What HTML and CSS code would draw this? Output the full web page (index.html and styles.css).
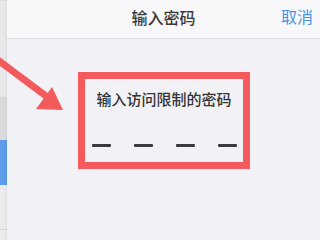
FILE: index.html
```html
<!DOCTYPE html>
<html lang="zh">
<head>
<meta charset="utf-8">
<link rel="stylesheet" href="styles.css">
</head>
<body>
<div class="screen">
  <div class="sidebar">
    <div class="seg seg-a"></div>
    <div class="seg seg-b"></div>
    <div class="seg seg-c"></div>
    <div class="seg seg-d"></div>
    <div class="seg seg-e"></div>
  </div>
  <div class="modal">
    <div class="header">
      <span class="title">输入密码</span>
      <span class="cancel">取消</span>
    </div>
    <div class="content">
      <div class="box">
        <div class="prompt">输入访问限制的密码</div>
        <div class="dashes">
          <span class="dash"></span>
          <span class="dash"></span>
          <span class="dash"></span>
          <span class="dash"></span>
        </div>
      </div>
    </div>
  </div>
  <svg class="arrow" width="80" height="120" viewBox="0 0 80 120">
    <line x1="-6" y1="57" x2="46" y2="96" stroke="#f25a5c" stroke-width="7"/>
    <polygon points="63,110 52,87 36,109" fill="#f25a5c"/>
  </svg>
</div>
</body>
</html>
```

FILE: styles.css
```css
html, body {
  margin: 0;
  padding: 0;
}
body {
  width: 320px;
  height: 240px;
  overflow: hidden;
  font-family: "Noto Sans CJK SC", "Noto Sans", sans-serif;
}
.screen {
  position: relative;
  display: flex;
  width: 320px;
  height: 240px;
  background: #f2f2f6;
}
.sidebar {
  width: 7px;
  display: flex;
  flex-direction: column;
  background: #e9e9eb;
}
.seg-a {
  height: 97px;
  background: #e8e8ea;
  box-shadow: inset 0 16px 0 -15px #dcdcde;
}
.seg-b {
  height: 43px;
  background: #dadadd;
}
.seg-c {
  height: 45px;
  background: #5c9ce8;
}
.seg-d {
  height: 44px;
  background: #ebebed;
  border-bottom: 1px solid #d6d6d8;
}
.seg-e {
  flex: 1;
  background: #ebebed;
}
.modal {
  flex: 1;
  display: flex;
  flex-direction: column;
  background: #f2f2f6;
  box-shadow: -1px 0 2px rgba(0,0,0,0.06);
}
.header {
  position: relative;
  height: 38px;
  display: flex;
  align-items: center;
  justify-content: center;
  background: #f8f8fa;
  border-bottom: 1px solid #dcdce0;
}
.title {
  font-size: 16px;
  font-weight: 500;
  color: #3a3a3c;
  line-height: 20px;
  padding-bottom: 4px;
}
.cancel {
  position: absolute;
  right: 7px;
  top: 6px;
  font-size: 16px;
  line-height: 20px;
  color: #4a92e4;
}
.content {
  flex: 1;
  display: flex;
  flex-direction: column;
  align-items: center;
  padding-top: 33px;
}
.box {
  width: 172px;
  height: 97px;
  box-sizing: border-box;
  border: 7px solid #f55a5d;
  display: flex;
  flex-direction: column;
  align-items: center;
  padding-top: 10px;
}
.prompt {
  font-size: 15px;
  font-weight: 500;
  line-height: 20px;
  color: #333333;
  padding-left: 1px;
}
.dashes {
  display: flex;
  gap: 23px;
  margin-top: 35px;
  padding-left: 1px;
}
.dash {
  width: 19px;
  height: 3px;
  background: #3a3a3c;
  border-radius: 1px;
}
.arrow {
  position: absolute;
  left: 0;
  top: 0;
}
```
